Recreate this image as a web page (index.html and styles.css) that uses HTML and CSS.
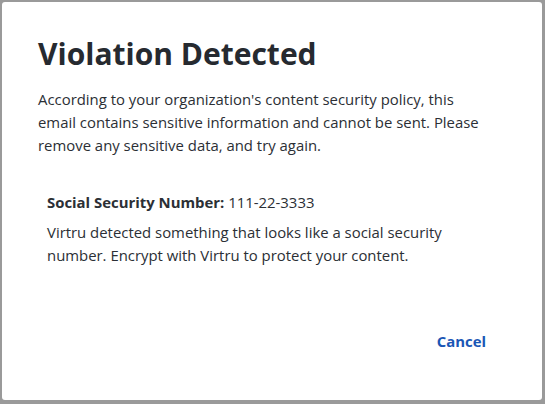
FILE: index.html
```html
<!DOCTYPE html>
<html>
<head>
<meta charset="utf-8">
<link rel="stylesheet" href="styles.css">
</head>
<body>
<div class="dialog">
  <h1 class="title">Violation Detected</h1>
  <p class="intro">According to your organization's content security policy, this email contains sensitive information and cannot be sent. Please remove any sensitive data, and try again.</p>
  <div class="violation">
    <div class="label"><strong>Social Security Number:</strong> 111-22-3333</div>
    <p class="desc">Virtru detected something that looks like a social security number. Encrypt with Virtru to protect your content.</p>
  </div>
  <div class="actions">
    <button class="cancel">Cancel</button>
  </div>
</div>
</body>
</html>
```
FILE: styles.css
```css
html, body {
  margin: 0;
  padding: 0;
  height: 100%;
}
body {
  background: #9a9a9a;
  font-family: "Open Sans", "Liberation Sans", sans-serif;
  color: #2b2f35;
  box-sizing: border-box;
  padding: 2px 3px 4px 2px;
}
.dialog {
  background: #fff;
  border-radius: 3px;
  height: 100%;
  box-sizing: border-box;
  padding: 30px 36px 0 36px;
  display: flex;
  flex-direction: column;
}
.title {
  margin: 0;
  font-size: 30px;
  font-weight: 700;
  line-height: 44px;
  color: #262a30;
}
.intro {
  margin: 12px 0 0 0;
  max-width: 452px;
  font-size: 14.9px;
  line-height: 23px;
}
.violation {
  padding: 0 9px;
  margin-top: 34px;
}
.label {
  font-size: 14.9px;
  line-height: 23px;
}
.label strong {
  font-weight: 700;
}
.desc {
  margin: 7px 0 0 0;
  font-size: 14.9px;
  line-height: 23px;
}
.actions {
  display: flex;
  justify-content: flex-end;
  margin-top: 64px;
  padding-right: 20px;
}
.cancel {
  background: none;
  border: none;
  padding: 0;
  font-family: inherit;
  font-size: 14.9px;
  font-weight: 700;
  color: #1a56b5;
  cursor: pointer;
}
```
